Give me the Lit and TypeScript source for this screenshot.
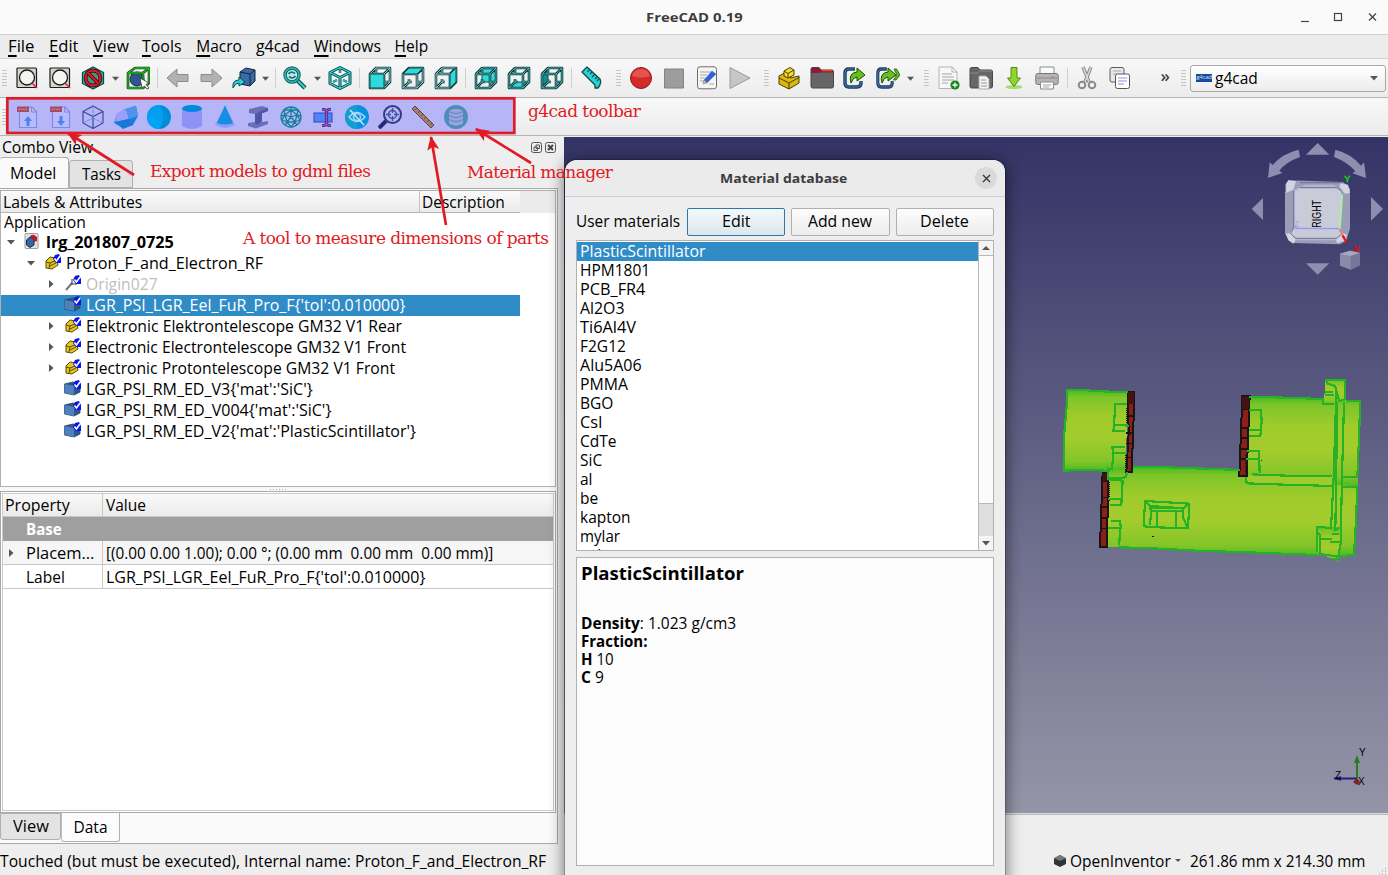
import { LitElement, html, svg, css, nothing } from "lit";
import { customElement } from "lit/decorators.js";
import { styleMap } from "lit/directives/style-map.js";

const icon = (body: unknown, w = 24, cls = "") =>
  html`<svg class="ico ${cls}" width=${w} height=${w} viewBox="0 0 24 24" fill="none" stroke-linejoin="round">${body}</svg>`;

/* A run of text fitted to a given advance width. */
const t = (content: unknown, w: number, cls = "") =>
  html`<span class="t ${cls}" style=${styleMap({ width: w + "px" })}><span class="fit" data-w=${w}>${content}</span></span>`;

const fitAll = svg`<rect x="2" y="2" width="19.500" height="19.500" rx="1" fill="#d5d5cb" stroke="#1b1b1b" stroke-width="1.200"/><circle cx="12" cy="11.500" r="7.500" fill="#f4f4f0" stroke="#1b1b1b" stroke-width="1.300"/><path d="M17 17l5 5" stroke="#e0244e" stroke-width="1.600"/>`;
const cubeWire = svg`<path d="M12 1.500L22 6.500V17.500L12 22.500L2 17.500V6.500Z M2 6.500L12 11.500L22 6.500M12 11.500V22.500" stroke="#0b4a4a" stroke-width="3"/><path d="M12 3V7M5 16L9 14M19 16L15 14" stroke="#0b4a4a" stroke-width="2.400"/><path d="M12 1.500L22 6.500V17.500L12 22.500L2 17.500V6.500Z M2 6.500L12 11.500L22 6.500M12 11.500V22.500M12 2V7M5 16L9 14M19 16L15 14" stroke="#3bd6d8" stroke-width="1.100"/>`;
const faces: Record<string, string> = {
  front: "M2 8H16V22H2Z", top: "M2 8L8 2H22L16 8Z", right: "M16 8L22 2V16L16 22Z",
  rear: "M8 2H22V16H8Z", bottom: "M2 22L8 16H22L16 22Z", left: "M2 8L8 2V16L2 22Z",
};
const viewCube = (face: string) => {
  const back = ["rear", "bottom", "left"].includes(face);
  const wire = "M8 2V8M8 13V16H11M16 16H22M2 22L8 16M2 8H16V22H2ZM2 8L8 2H22V16L16 22M16 8L22 2";
  const f = svg`<path d=${faces[face]} fill=${face === "left" ? "#158f92" : "#2fd9dc"} stroke="#0b4a4a" stroke-width="1"/>`;
  return svg`${back ? f : nothing}<path d=${wire} stroke="#123c3c" stroke-width="2.600"/><path d=${wire} stroke=${back ? "#4fb9b9" : "#8fd8d8"} stroke-width=".9"/>${back ? nothing : f}`;
};
const arrowPath = "M1 12L11 3V8.500H22V15.500H11V21Z";
const part = svg`<path d="M2 10L9 6L13 8V12L22 10V17L12 23L2 18Z" fill="#d9b90f" stroke="#4b3f00"/><path d="M7 5L13 1.500L17 4L17 9L11 12L7 10Z" fill="#f5dc2c" stroke="#4b3f00"/><path d="M7 5L11 7.500L17 4M11 7.500V12M2 12L12 17L22 11.500M12 17V23" stroke="#4b3f00"/>`;
const refresh = svg`<path d="M12 3H6Q2 3 2 7V17Q2 21 6 21H14Q18 21 18 17V15" stroke="#173a63" stroke-width="3.400"/><path d="M12 3H6Q2 3 2 7V17Q2 21 6 21H14Q18 21 18 17V15" stroke="#4f7cab" stroke-width="1"/>`;
const greenArrow = svg`<path d="M8 17Q5 7 14 6V2L22 9L14 15V11Q10 11 8 17Z" fill="#64c21c" stroke="#1e4a04"/>`;
const folder = svg`<path d="M1 3Q1 1.500 3 1.500H9L11 4H22Q23.500 4 23.500 6V20Q23.500 22 22 22H2.500Q1 22 1 20Z" fill="#666" stroke="#474747"/>`;

const I: Record<string, unknown> = {
  fit: fitAll,
  style: svg`<path d="M12 1L22.500 6.500V17.500L12 23L1.500 17.500V6.500Z" fill="#27c4c8" stroke="#0b4a4a" stroke-width="1.300"/><circle cx="12" cy="12" r="7.500" fill="#4a8f92" stroke="#3d0505" stroke-width="3.800"/><circle cx="12" cy="12" r="7.500" stroke="#d22020" stroke-width="2.300"/><path d="M7 7L17 17" stroke="#3d0505" stroke-width="3.800"/><path d="M7 7L17 17" stroke="#d22020" stroke-width="2.300"/>`,
  bbox: svg`<circle cx="11" cy="13" r="7" fill="#2f568e" stroke="#16294a"/><path d="M2 7L9 2H23L17 7ZM2 7V22H17V7M23 2V17L17 22" stroke="#0a3c0c" stroke-width="2.600"/><path d="M2 7L9 2H23L17 7ZM2 7V22H17V7M23 2V17L17 22" stroke="#25b52b" stroke-width="1.300"/><path d="M14 12L23 17L20 18.500L23 22L21 23L18.500 20L16 22Z" fill="#fff" stroke="#333" stroke-width=".8"/>`,
  back: svg`<path d=${arrowPath} fill="#b2b2b2" stroke="#8b8b8b"/>`,
  fwd: svg`<path d=${arrowPath} transform="translate(24 0) scale(-1 1)" fill="#b2b2b2" stroke="#8b8b8b"/>`,
  link: svg`<path d="M8 6L14 2L23 4V15L18 20L8 18Z" fill="#3a6aa8" stroke="#14233c"/><path d="M8 6L18 8L23 4M18 8V20" stroke="#14233c"/><path d="M1 22Q0 14 7 14V11L13 16L7 20V17Q3 17 1 22Z" fill="#2fd0d4" stroke="#0b4a4a"/>`,
  zoom: svg`<path d="M14 14L22 22" stroke="#0b4a4a" stroke-width="4.500"/><path d="M14 14L22 22" stroke="#2fcfd2" stroke-width="2.200"/><circle cx="9" cy="9" r="7" fill="#bfe7e8" stroke="#0b5a5c" stroke-width="3.400"/><circle cx="9" cy="9" r="7" stroke="#2fb9bd" stroke-width="1.600"/><path d="M5.500 8Q8 4.500 12 7.500M12.500 10Q10 13.500 6 10.500" stroke="#0b7a7c" stroke-width="1.800"/>`,
  iso: cubeWire,
  front: viewCube("front"), top: viewCube("top"), right: viewCube("right"),
  rear: viewCube("rear"), bottom: viewCube("bottom"), left: viewCube("left"),
  measure: svg`<path d="M2 6L7 1L20 13Q22 17 18 22L15 22V19Z" fill="#2dd0d3" stroke="#0b4a4a" stroke-width="1.300"/><path d="M9.500 3.500L7.500 6M12 6L10 8M14.500 8.500L12 11M17 11L15 13M19 13L17 15" stroke="#0b4a4a" stroke-width="1.200"/>`,
  record: svg`<circle cx="12" cy="12" r="10.500" fill="#d42a2a" stroke="#8e1626"/><path d="M3 10Q5 3 12 3T21 10Q12 13 3 10Z" fill="#ec6058" opacity=".75"/>`,
  stop: svg`<rect x="2.500" y="3" width="19" height="19" fill="#9d9d9d" stroke="#828282"/>`,
  macro: svg`<rect x="2.500" y=".8" width="19" height="22" rx="2.500" fill="#f5f5f2" stroke="#6d6d6d"/><path d="M5 6H17M5 9H12M5 12H10M5 15H9M14 18H19" stroke="#aaa79c"/><path d="M9 14L17 5L21 8L12 17L8 18Z" fill="#2b62d9" stroke="#4a72b8" stroke-width=".5"/><path d="M8 18L9 14L12 17Z" fill="#e8b577"/>`,
  play: svg`<path d="M2 1.500L22 12L2 22.500Z" fill="#c6c6c6" stroke="#9b9b9b"/>`,
  part,
  folder: svg`${folder}<path d="M1 7V3Q1 1.500 3 1.500H9L11 4H22Q23 4 23 6.500H11L9 7Z" fill="#8b1b36"/><path d="M12 4.500H22" stroke="#e0512f" stroke-width="1.500"/>`,
  re1: svg`${refresh}${greenArrow}`,
  re2: svg`<g transform="scale(.9 1)">${refresh}</g><g transform="translate(-2 0)">${greenArrow}</g><path d="M18 3H20.500L24 9L20 14H17.500L21 9Z" fill="#64c21c" stroke="#1e4a04" stroke-width=".8"/>`,
  newdoc: svg`<path d="M3 1H16L21 6V22.500H3Z" fill="#f7f7f7" stroke="#b4b4b4"/><path d="M16 1V6H21" stroke="#b4b4b4"/><path d="M6 8H16M6 11H18M6 14H18M6 17H12" stroke="#a6a6a6"/><circle cx="19" cy="19" r="4.600" fill="#148a20"/><path d="M16.500 19H21.500M19 16.500V21.500" stroke="#fff" stroke-width="1.300"/>`,
  open: svg`${folder}<path d="M1 7H9L11 5H23" stroke="#898989"/><path d="M10 10H17L20 13V23H10Z" fill="#f3f3f0" stroke="#aaa"/><path d="M12 14H17M12 17H18M12 20H18" stroke="#999"/>`,
  save: svg`<ellipse cx="12" cy="21" rx="8.500" ry="2" fill="#a8dc73"/><path d="M9 1.500H15V12H18.500L12 20.500L5.500 12H9Z" fill="#8fd62c" stroke="#588a20"/>`,
  print: svg`<path d="M5 8V1H19V8" fill="#fafafa" stroke="#8b8b8b"/><rect x=".8" y="7.500" width="22.400" height="11" rx="2" fill="#b5b5b5" stroke="#777"/><path d="M2 12H22" stroke="#999" stroke-width="1.500"/><path d="M16 11H19" stroke="#e66"/><path d="M5.500 16H18.500V23H5.500Z" fill="#fafafa" stroke="#8b8b8b"/><path d="M8 19H16M8 21H14" stroke="#aaa"/>`,
  cut: svg`<path d="M8 1L14 16M16 1L10 16" stroke="#8a8a8a" stroke-width="3.400"/><path d="M8 1L14 16M16 1L10 16" stroke="#d9d9d9" stroke-width="1.500"/><circle cx="7" cy="19" r="3.300" stroke="#8a8a8a" stroke-width="2"/><circle cx="17" cy="19" r="3.300" stroke="#8a8a8a" stroke-width="2"/>`,
  copy: svg`<rect x="2" y="1.500" width="14" height="14.500" rx="2" fill="#e8e8e8" stroke="#5d5d5d"/><path d="M5 5H13M5 8H10" stroke="#aaa"/><rect x="7.500" y="8" width="14" height="14.500" rx="2" fill="#fff" stroke="#555"/><path d="M10 12H19M10 15H19M10 18H16" stroke="#9090df"/>`,
};

const gdml = (down: boolean) => svg`<path d="M4.500 7V22.500H21.500V6.500L17 2H12" stroke="#7f86e4" stroke-width="1.100" fill="#b9baf9"/><path d="M16.500 2V7H21" stroke="#7f86e4"/><rect x="2" y="1.500" width="12" height="5.500" fill="#a94b62"/><path d="M3.500 4.300H12.500" stroke="#d09ab8" stroke-dasharray="1.500 .8"/><path d=${down ? "M11.500 11H14.500V16H17L13 21L9 16H11.500Z" : "M11.500 21H14.500V16H17L13 11L9 16H11.500Z"} fill="#4b82f2"/>`;
const G: unknown[] = [
  gdml(false), gdml(true),
  svg`<path d="M12 1L22 6.500V18L12 23.500L2 18V6.500ZM2 6.500L12 11.500L22 6.500M12 11.500V23.500" stroke="#44469f" stroke-width="1.200"/><path d="M12 1V13L2 18M12 13L22 18" stroke="#5d8fcb" stroke-dasharray="3 1"/>`,
  svg`<path d="M11 4L22 1L24 11L19 20L9 23L0 18L3 9Z" fill="#1a80dc"/><path d="M3 8L12 4L15 14L1 17Z" fill="#9b9ffa"/><path d="M12 4L22 .5L24 11L15 14Z" fill="#5093ec"/><path d="M1 17L15 14L19 20L9 24Z" fill="#1878d6"/>`,
  svg`<circle cx="12" cy="12" r="12" fill="#008edb"/><path d="M0 12A12 12 0 0 0 12 24Q16 18 16 12Q8 15 0 12Z" fill="#00a5fa"/><path d="M0 12A12 12 0 0 1 12 0Q16 5 16 12Q8 15 0 12Z" fill="#049df0"/>`,
  svg`<path d="M2 3V21Q12 27 22 21V3Z" fill="#8e92f6"/><ellipse cx="12" cy="3.500" rx="10" ry="3.500" fill="#008adf"/>`,
  svg`<path d="M12 .5L22 20Q12 26 2 20Z" fill="#8e9dfa"/><path d="M12 .5L20 18Q12 21 4 18Z" fill="#168ee4"/>`,
  svg`<path d="M3 4L16 1L22 3V6L16 8V17L22 16V19L10 23.500L2 21V18L9 17V9L3 8Z" fill="#6a70b8"/><path d="M9 9L16 7V16L11 20L9 18ZM12 7L22 3V6L12 10Z" fill="#5054a8"/>`,
  svg`<g stroke="#157f9c" stroke-width="1.300"><circle cx="12" cy="12" r="10"/><path d="M12 5L18 10L16 17H8L6 10ZM12 2V5M2 11L6 10M22 11L18 10M6 20L8 17M18 20L16 17M12 12V5M12 12L18 10M12 12L16 17M12 12L8 17M12 12L6 10M12 5L5 5L6 10L3 15L8 17L12 22L16 17L21 15L18 10L19 5Z"/></g>`,
  svg`<rect x="2" y="8" width="18" height="9" fill="#4a86fc" stroke="#3f45b6"/><path d="M10 4.500H12.500L14.500 6L16.500 4.500H19M14.500 6V19M10 20.500H12.500L14.500 19L16.500 20.500H19" stroke="#57308f" stroke-width="3.200"/><path d="M10 4.500H12.500L14.500 6L16.500 4.500H19M14.500 6V19M10 20.500H12.500L14.500 19L16.500 20.500H19" stroke="#9a52c0" stroke-width="1.200"/>`,
  svg`<circle cx="12" cy="12" r="12" fill="#078fe0"/><path d="M12 0A12 12 0 0 0 12 24Z" fill="#129fd0"/><path d="M4 12Q12 3 20 12Q12 21 4 12Z" stroke="#a9d5fb" stroke-width="1.500"/><circle cx="12" cy="12" r="3.500" stroke="#a9d5fb" stroke-width="1.500"/><path d="M5 5L19 20" stroke="#c5dfff" stroke-width="1.600"/>`,
  svg`<path d="M1 23L8 16" stroke="#252b72" stroke-width="4"/><circle cx="14.500" cy="9.500" r="8.500" stroke="#333a82" stroke-width="2"/><circle cx="14.500" cy="9.500" r="4" stroke="#41519e" stroke-width="1.500"/><path d="M14.500 3V8M14.500 11V16M8 9.500H13M16 9.500H21" stroke="#41519e" stroke-width="1.300"/>`,
  svg`<path d="M1 4L4 1L23 20L20 23Z" fill="#a2845e" stroke="#6c3b62"/><path d="M6 3L4 5M9 6L7 8M12 9L10 11M15 12L13 14M18 15L16 17M21 18L19 20" stroke="#6d4d55"/>`,
  svg`<circle cx="12" cy="12" r="12" fill="#4e8cba"/><path d="M5 6Q12 1.500 19 6V18.500Q12 23 5 18.500Z" fill="#98a4dc"/><path d="M5 6.500Q12 10.500 19 6.500M5 10.500Q12 14.500 19 10.500M5 14.500Q12 18.500 19 14.500" stroke="#5f83c0" stroke-width="1"/>`,
];

const check = svg`<path d="M11 1L15 0L17 4V9H12L9 5Z" fill="#0a14f0"/><path d="M10.500 4.500L12.500 7L16 2" stroke="#fff" stroke-width="1.600"/>`;
const treeIcons: Record<string, unknown> = {
  doc: svg`<rect x="1" y=".5" width="13" height="15" rx="1" fill="#e2e2e2" stroke="#9d9d9d"/><path d="M2.500 7L6 4L10 6V12L6 14.500L2.500 12Z" fill="#3465a4" stroke="#182c4c"/><path d="M6 4Q7 1 10 2L13 4V8L10 9V6Z" fill="#c9141e"/>`,
  part: svg`<path d="M2 7L6 3L12 4L14 11L8 15L2 14Z" fill="#e4c721" stroke="#5a4a00"/><path d="M2 8L6 9L11 7M6 9L5 14M6 12L12 9" stroke="#5a4a00"/>${check}`,
  origin: svg`<path d="M2 15L8 8" stroke="#777" stroke-width="2"/><path d="M8 9V4M7 9H13" stroke="#333"/>${check}`,
  solid: svg`<path d="M.5 4L9 2L16 4V12L10 15L.5 13Z" fill="#2f5688" stroke="#254268" stroke-width=".8"/><path d="M.5 4L10 6V15L.5 13Z" fill="#4e80bd"/>${check}`,
};
type Row = [number, string, string, string, number, string?];
const tree: Row[] = [
  [0, "open", "doc", "lrg_201807_0725", 128, "bold"],
  [1, "open", "part", "Proton_F_and_Electron_RF", 197],
  [2, "shut", "origin", "Origin027", 72, "dim"],
  [2, "", "solid", "LGR_PSI_LGR_Eel_FuR_Pro_F{'tol':0.010000}", 319, "sel"],
  [2, "shut", "part", "Elektronic Elektrontelescope GM32 V1 Rear", 316],
  [2, "shut", "part", "Electronic Electrontelescope GM32 V1 Front", 320],
  [2, "shut", "part", "Electronic Protontelescope GM32 V1 Front", 309],
  [2, "", "solid", "LGR_PSI_RM_ED_V3{'mat':'SiC'}", 227],
  [2, "", "solid", "LGR_PSI_RM_ED_V004{'mat':'SiC'}", 245],
  [2, "", "solid", "LGR_PSI_RM_ED_V2{'mat':'PlasticScintillator'}", 330],
];
const mats: [string, number][] = [
  ["PlasticScintillator", 126], ["HPM1801", 70], ["PCB_FR4", 65], ["Al2O3", 45], ["Ti6Al4V", 56], ["F2G12", 46],
  ["Alu5A06", 62], ["PMMA", 48], ["BGO", 33], ["CsI", 22], ["CdTe", 37], ["SiC", 22], ["al", 13], ["be", 18],
  ["kapton", 51], ["mylar", 40], ["nylon", 40],
];
const menus: [string, string, number][] = [
  ["F", "ile", 27], ["E", "dit", 30], ["V", "iew", 36], ["T", "ools", 40], ["M", "acro", 46], ["", "g4cad", 44], ["W", "indows", 67], ["H", "elp", 34],
];
const bar1 = "fit fit style > bbox | back fwd link > | zoom > iso | front top right | rear bottom left | measure : record stop macro play : part folder re1 re2 > : newdoc open save print | cut copy".split(" ");

@customElement("app-root")
export class AppRoot extends LitElement {
  static styles = css`
    :host { display: block; width: 1388px; height: 875px; overflow: hidden; position: relative; background: #eee; font: 15.5px/20px "Open Sans", "Noto Sans", sans-serif; color: #000; }
    * { box-sizing: border-box; }
    .app { display: flex; flex-direction: column; height: 875px; }
    .t, .fit { display: inline-block; white-space: pre; flex: none; }
    .t { margin-top: -2px; }
    .title .t, .dt .t, .tab .t, .p .t, .rstat .t { margin-top: 0; }
    .fit { transform-origin: 0 50%; }
    .bold { font-weight: 700; }
    .ico { display: block; flex: none; }
    .title { height: 35px; flex: none; background: #fafafa; border-bottom: 1px solid #d0d0d0; display: grid; grid-template-columns: 1fr auto 1fr; align-items: center; color: #3d3d3d; font-size: 13px; }
    .wm { display: flex; justify-content: flex-end; gap: 22px; padding-right: 9.5px; }
    .menu { height: 24px; flex: none; background: #ececec; border-bottom: 1px solid #d2d2d2; display: flex; gap: 13.8px; padding-left: 8px; align-items: center; }
    .menu u { text-underline-offset: 3px; text-decoration-thickness: 1.5px; }
    .bar { height: 39px; flex: none; display: flex; align-items: center; border-bottom: 1px solid #b4b4b4; background: linear-gradient(#f8f8f8, #ececec); }
    .bar.two { height: 38px; }
    .cell { width: 33px; flex: none; display: flex; justify-content: center; }
    .dd { width: 11.6px; flex: none; display: flex; justify-content: center; }
    .sep { width: 1px; height: 20px; margin: 0 3px; flex: none; background: #cfcfcf; }
    .grip { width: 5px; height: 18px; margin: 0 3px 0 8px; flex: none; background: radial-gradient(circle, #b2b2b2 .7px, transparent 1px) 0 0 / 2.500px 3px; }
    .grip.first { margin: 0 3.5px 0 2px; }
    .more { flex: 1; text-align: right; padding: 0 3px 4px 0; font-size: 17px; font-weight: 600; color: #444; }
    .combo { width: 196px; height: 27px; margin: 0 2px 0 1px; border: 1px solid #a8a8a8; border-radius: 3px; background: linear-gradient(#fff, #ececec); display: flex; align-items: center; padding: 0 7px 0 5px; gap: 3px; }
    .combo .t { margin-top: 0; }
    .badge { width: 16px; height: 8px; background: #1749a0; color: #d5e0f5; font-size: 6px; line-height: 7px; text-align: center; letter-spacing: -.2px; }
    .grow { flex: 1; }
    .main { flex: 1; display: flex; min-height: 0; }
    .left { width: 564px; display: flex; flex-direction: column; padding-top: 1px; }
    .dock { width: 558px; display: flex; flex-direction: column; height: 707px; border-bottom: 1px solid #a9a9a9; }
    .dhead { height: 21px; display: flex; align-items: center; padding: 0 1px 0 2px; gap: 2px; }
    .dhead .grow { align-self: stretch; }
    .tabs { height: 30px; display: flex; align-items: flex-end; flex: none; }
    .tab { height: 28px; width: 64px; border: 1px solid #b0b0b0; background: #e3e3e3; display: flex; align-items: center; justify-content: center; border-radius: 3px 3px 0 0; }
    .tab.on { height: 31px; width: 69px; padding-right: 2px; background: #fafafa; border-left: 0; border-bottom: 0; }
    .pane { flex: 1; background: #f8f8f8; border: 1px solid #a9a9a9; border-width: 1px 1px 0 0; display: flex; flex-direction: column; min-height: 0; }
    .tree { height: 297px; margin: 1px 1px 0 0; border: 1px solid #b0b0b0; background: #fff; flex: none; }
    .thead { display: flex; height: 22px; background: #ebebeb; }
    .th { background: linear-gradient(#fafafa, #eaeaea); border-bottom: 1px solid #b5b5b5; padding-left: 2px; display: flex; align-items: center; }
    .th .t { margin-top: 0; }
    .th + .th { border-left: 1px solid #c4c4c4; }
    .c1 { width: 418px; } .c2 { width: 101px; }
    .app0 { height: 19px; padding-left: 3px; display: flex; align-items: center; }
    .row { height: 21px; width: 519px; display: flex; align-items: center; }
    .tw { width: 20px; display: flex; justify-content: center; flex: none; }
    .row .ico { margin: -2px 5px 0 3px; }
    .row .tw { margin-top: -2px; }
    .row.sel { background: #308cc6; color: #fff; }
    .row.dim { color: #bebebe; }
    .split { height: 4px; display: flex; justify-content: center; align-items: center; }
    .split i { width: 17px; height: 1px; background: repeating-linear-gradient(90deg, #aaa 0 1px, transparent 1px 3px); }
    .props { flex: 1; border: 1px solid #a9a9a9; margin: 0 1px 0 0; background: #fff; display: flex; flex-direction: column; padding: 1px; border-width: 1px; outline: 1px solid #ccc; outline-offset: -3px; }
    .p { display: grid; grid-template-columns: 101px 1fr; height: 24px; align-items: stretch; }
    .p > div { display: flex; align-items: center; border-bottom: 1px solid #c8c8c8; padding-left: 3px; }
    .p > div:first-child { border-right: 1px solid #c8c8c8; }
    .p.h { background: linear-gradient(#fafafa, #eaeaea); }
    .p.base { background: #9f9f9f; color: #fff; }
    .p.base > div { border-color: #9f9f9f; padding-left: 24px; }
    .p.alt { background: #f6f6f6; }
    .p .tw { width: 21px; margin-right: 0; }
    .p .tw.s { margin-left: -4px; width: 20px; margin-right: 5px; }
    .btabs { height: 30px; display: flex; background: #fafafa; border-right: 1px solid #a9a9a9; }
    .btab { height: 27px; width: 61px; border: 1px solid #b0b0b0; border-radius: 0 0 3px 3px; background: #e3e3e3; display: flex; justify-content: center; align-items: center; }
    .btab.on { height: 29px; width: 59px; padding-top: 1px; background: #fcfcfc; border-top: 0; border-left-color: #bbb; }
    .status { flex: 1; display: flex; align-items: center; padding-top: 4px; }
    .right { flex: 1; display: flex; flex-direction: column; padding-top: 1px; }
    .view { height: 677px; background: linear-gradient(#333366, #9595a8); position: relative; border-bottom: 1px solid #dcdcdc; }
    .rstat { flex: 1; border-top: 1px solid #b8b8b8; display: flex; justify-content: flex-end; align-items: flex-end; padding: 0 23px 4px 0; gap: 4px; }
    .nav { position: absolute; left: 676px; top: 0; }
    .model { position: absolute; left: 486px; top: 233px; }
    .axes { position: absolute; left: 766px; top: 608px; }
    .dlg { position: absolute; left: 565px; top: 160px; width: 440px; height: 730px; background: #eee; border-radius: 12px 12px 0 0; box-shadow: 0 3px 14px 3px rgba(0,0,0,.42), 0 0 0 1px rgba(0,0,0,.2); display: flex; flex-direction: column; }
    .dt { height: 37px; flex: none; border-bottom: 1px solid #cfcfcf; background: #ebebeb; border-radius: 12px 12px 0 0; display: grid; grid-template-columns: 1fr auto 1fr; align-items: center; color: #3d3d3d; font-size: 13px; padding: 0 8px 0 5px; }
    .close { justify-self: end; width: 22px; height: 22px; border-radius: 50%; background: #dadada; display: grid; place-items: center; }
    .db { padding: 11px 11px 0; display: flex; flex-direction: column; }
    .btns { display: flex; gap: 6px; align-items: center; height: 27px; }
    .btns .t { margin-top: -1px; }
    .btns > .t { margin-right: 1px; }
    .btn { width: 99px; height: 28px; border: 1px solid #b0b0b0; border-radius: 2px; background: linear-gradient(#fdfdfd, #ececec); display: flex; align-items: center; justify-content: center; }
    .btn.on { border-color: #2f76a8; background: linear-gradient(#f3f8fb, #dbe7ee); }
    .list { margin-top: 5px; height: 311px; border: 1px solid #b0b0b0; background: #fff; display: flex; }
    .items { flex: 1; overflow: hidden; padding-top: 1px; }
    .m { height: 19px; padding-left: 3px; display: flex; align-items: center; }
    .m.sel { background: #308cc6; color: #fff; }
    .sb { width: 15px; border-left: 1px solid #b8b8b8; background: #dedede; display: flex; flex-direction: column; align-items: center; }
    .sbb { height: 14px; width: 100%; display: grid; place-items: center; background: #f5f5f5; }
    .thumb { height: 249px; width: 100%; background: #fbfbfb; border: 1px solid #b8b8b8; border-width: 1px 0; }
    .det { margin-top: 6px; height: 309px; border: 1px solid #b0b0b0; background: #fcfcfc; padding: 4px; line-height: 18px; display: flex; flex-direction: column; }
    .det .t { margin-top: 0; }
    .det h3 { margin: -1px 0 29px; font-size: 18px; line-height: 24px; height: 24px; }
    .ln { height: 18px; display: flex; }
    .marks { position: absolute; left: 0; top: 0; pointer-events: none; }
    .note { font: 17px "DejaVu Serif", serif; fill: #e01b24; }
    .tiny { font: 10px "Liberation Sans", sans-serif; }
  `;

  updated() {
    this.renderRoot.querySelectorAll<HTMLElement>(".fit").forEach((el) => {
      el.style.transform = `scaleX(${Number(el.dataset.w) / el.offsetWidth})`;
    });
  }

  tri(dir: string, s = 8) {
    const d = dir === "open" ? "M0 2H8L4 6.500Z" : dir === "up" ? "M0 6H8L4 2Z" : "M2 0V8L6.500 4Z";
    return html`<svg width=${s} height=${s} viewBox="0 0 8 8"><path d=${d} fill="#555"/></svg>`;
  }

  item(k: string) {
    if (k === ">") return html`<div class="dd">${this.tri("open", 7)}</div>`;
    if (k === "|") return html`<div class="sep"></div>`;
    if (k === ":") return html`<div class="grip"></div>`;
    return html`<div class="cell">${icon(I[k])}</div>`;
  }

  nav() {
    return svg`
      <g fill="#8d8eb0"><path d="M198 53L233 18L268 53Z"/><path d="M198 379L233 413L268 379Z"/><path d="M69 183V249L35 216Z"/><path d="M393 180V251L429 216Z"/>
      <path d="M176 38L180 60Q138 75 118 101L127 108L84 123L89 76L98 84Q126 50 176 38Z"/><path d="M286 38L282 60Q322 75 346 103L337 109L378 123L372 76L363 86Q334 50 286 38Z"/></g>
      <path d="M145 130L310 135L330 155V275L318 312L300 322L160 318L135 290V150Z" fill="#9b9cb8"/>
      <path d="M170 155L195 143H280L300 155L303 165L298 275L306 290L295 310H165L150 288L160 275V160Z" fill="#b4b5ca"/>
      <path d="M180 154H290L303 165V260L290 276H175L165 262V165Z" fill="#cacbd8"/><path d="M160 275H298L306 290L290 304H168L150 288Z" fill="#c9cad8"/>
      <g fill="#d3d4e2"><path d="M145 130L168 133L160 158L137 168V142Z"/><path d="M300 138L324 143L330 168L315 170L299 150Z"/><path d="M137 290L152 288L167 309L160 320L145 310Z"/><path d="M307 289L320 292L318 310L292 319L288 309Z"/></g>
      <path d="M161 161V272L152 290L168 304H290L307 290M180 137H310M303 160L290 152H180M137 142V165" fill="none" stroke="#62638a" stroke-width="2.500"/>
      <path d="M165 274L300 275" stroke="#9696ee" stroke-width="4"/><path d="M306 172L299 276" stroke="#a9efa9" stroke-width="6.500"/><path d="M298 276L310 298" stroke="#f57c7c" stroke-width="5"/><path d="M308 296L320 316" stroke="#f00c0c" stroke-width="7"/>
      <text transform="translate(242 272) rotate(-90)" font-family="Liberation Sans" font-size="40" textLength="83" lengthAdjust="spacingAndGlyphs">RIGHT</text>
      <text x="163" y="271" font-size="25" font-family="Liberation Sans" fill="#a2a2e8">Z</text><text x="313" y="134" font-size="28" font-family="Liberation Sans" fill="#0e0" stroke="#0e0">Y</text><text x="340" y="345" font-size="29" font-family="Liberation Sans" fill="#f00000" stroke="#f00000">X</text>
      <path d="M300 350L330 341L360 348V385L332 398L300 386Z" fill="#898ba8"/><path d="M300 350L332 357L360 348L330 341Z" fill="#a6a7be"/><path d="M332 357V398L360 385V348Z" fill="#75779a"/><path d="M371 360H409L390 379Z" fill="#454567"/>`;
  }

  model() {
    const g = "url(#gr)";
    return svg`
      <defs><linearGradient id="gr" x1="0" y1="0" x2="0" y2="1"><stop offset="0" stop-color="#3fba20"/><stop offset=".1" stop-color="#7dc529"/><stop offset=".33" stop-color="#9fcb2b"/><stop offset=".6" stop-color="#a3cc2c"/><stop offset=".88" stop-color="#83c529"/><stop offset="1" stop-color="#4aba22"/></linearGradient></defs>
      <g fill=${g}><path d="M49 58L235 64L226 295L175 303L38 302L43 185Z"/><path d="M249 288L570 300L590 320L850 335L920 350L912 559L150 530L170 300Z"/><path d="M597 78L932 91L924 350L585 320Z"/><path d="M826 28L887 30V95L815 104L823 80Z"/><path d="M800 470H870L866 575L800 545Z"/></g>
      <path d="M585 317L850 320V348L585 340Z" fill="#a0cb2c"/>
      <g fill="#8a2017" stroke="#191416" stroke-width="6"><path d="M234 65L253 66L251 140L245 305H229L236 190Z"/><path d="M577 78H599L590 318H568Z"/><path d="M158 305L175 308L171 530H150Z"/></g>
      <path d="M235 66H252V102H235ZM577 80H597V118H577ZM160 308H173V334H160Z" fill="#471214"/>
      <path d="M230 137H250M229 188H248M228 220H247M228 262H246M576 118H598M575 174H595M574 203H592M573 237H590M570 267H590M158 334H175M157 382H173M156 410H173M154 444H173M152 475H173" stroke="#191416" stroke-width="5"/>
      <path d="M231 115V170M226 255V300M596 115V160M588 255V315M176 335V395M171 480V525" stroke="#191416" stroke-width="5" stroke-dasharray="3 3"/>
      <g fill="none" stroke="#27b126" stroke-width="6.500">
        <path d="M49 60H105L130 63L234 67M50 58L50 110L43 190L41 302L120 299L180 303M231 103L196 102L192 164L190 184H226M192 164L236 167M225 230H187L190 250H232M190 250L186 298L175 296V326L228 322L231 306M178 328L218 332L214 405H180M174 386H214M182 452H210L212 470L207 526M173 473H212M205 532L290 534L440 542L600 547L800 555"/>
        <path d="M249 290L330 291L434 295L570 300M597 80L707 83L815 87M597 119H633L635 155L631 198H596M596 181H632M592 243H627L629 310M588 266H630M588 320L590 340L706 344L850 348M605 313L710 317L847 319"/>
        <path d="M285 393L418 401L414 475L322 472L281 469ZM285 393L300 408L400 415L418 401M300 408L303 430L300 465M398 415L400 445L414 475M306 423H396M321 423V472M378 425V472M300 415H400"/>
        <path d="M828 30H886V88L868 94L855 48L832 40ZM826 65H850M825 76H852M820 84V102H852M858 50V95L851 320L843 475L810 470L802 472V545M862 97L856 480L868 475M882 97L876 322L872 520L865 560M887 93H930L928 180L922 320H875M872 350H922L918 450L912 555L870 558M806 506H845M810 510V552L864 560M802 487L810 494V505M845 493H866M840 517H870M847 568H864V573"/>
      </g><path d="M305 499H312M632 271H636" stroke="#111" stroke-width="3"/>`;
  }

  render() {
    return html`<div class="app">
      <div class="title"><span></span>${t("FreeCAD 0.19", 97, "bold")}
        <div class="wm">
          <svg width="11" height="13"><path d="M1 10.500H9" stroke="#444" stroke-width="1.200"/></svg>
          <svg width="12" height="13"><rect x="1.500" y="2.500" width="7" height="7" fill="none" stroke="#444" stroke-width="1.200"/></svg>
          <svg width="12" height="13"><path d="M2 2.500L9 9.500M9 2.500L2 9.500" stroke="#444" stroke-width="1.300"/></svg>
        </div></div>
      <div class="menu">${menus.map(([a, b, w]) => t(html`<u>${a}</u>${b}`, w))}</div>
      <div class="bar"><div class="grip first"></div>${bar1.map((k) => this.item(k))}
        <div class="more">»</div><div class="grip"></div>
        <div class="combo"><span class="badge">g4cad</span>${t("g4cad", 43)}<span class="grow"></span>${this.tri("open")}</div>
      </div>
      <div class="bar two"><div class="grip first"></div>
        ${G.map(() => html`<div class="cell"></div>`)}</div>
      <div class="main">
        <div class="left">
          <div class="dock">
            <div class="dhead">${t("Combo View", 91)}<span class="grow"></span>
              <svg width="12" height="12"><rect x=".5" y=".5" width="10" height="10" rx="2" fill="none" stroke="#555"/><path d="M5 3H8.500V6.500H5ZM3 5H6.500V8.500H3Z" fill="none" stroke="#555"/></svg>
              <svg width="12" height="12"><rect x=".5" y=".5" width="10" height="10" rx="2" fill="none" stroke="#555"/><path d="M3 3L8 8M8 3L3 8" stroke="#444" stroke-width="2"/></svg></div>
            <div class="tabs"><div class="tab on">${t("Model", 46)}</div><div class="tab">${t("Tasks", 39)}</div></div>
            <div class="pane">
              <div class="tree">
                <div class="thead"><div class="th c1">${t("Labels & Attributes", 139)}</div><div class="th c2">${t("Description", 83)}</div></div>
                <div class="app0">${t("Application", 82)}</div>
                ${tree.map(([d, tw, ic, s, w, c]) => html`<div class="row ${c ?? ""}">
                  ${Array.from({ length: d }, () => html`<span class="tw"></span>`)}<span class="tw">${tw ? this.tri(tw) : nothing}</span>
                  <svg class="ico" width="17" height="17" viewBox="0 0 17 17" fill="none">${treeIcons[ic]}</svg>${t(s, w)}</div>`)}
              </div>
              <div class="split"><i></i></div>
              <div class="props">
                <div class="p h"><div>${t("Property", 65)}</div><div>${t("Value", 40)}</div></div>
                <div class="p base"><div>${t("Base", 36, "bold")}</div><div></div></div>
                <div class="p alt"><div><span class="tw s">${this.tri("shut")}</span>${t("Placem…", 68)}</div><div>${t("[(0.00 0.00 1.00); 0.00 °; (0.00 mm  0.00 mm  0.00 mm)]", 387)}</div></div>
                <div class="p"><div><span class="tw"></span>${t("Label", 39)}</div><div>${t("LGR_PSI_LGR_Eel_FuR_Pro_F{'tol':0.010000}", 319)}</div></div>
              </div>
            </div>
            <div class="btabs"><div class="btab">${t("View", 36)}</div><div class="btab on">${t("Data", 34)}</div></div>
          </div>
          <div class="status">${t("Touched (but must be executed), Internal name: Proton_F_and_Electron_RF", 546)}</div>
        </div>
        <div class="right">
          <div class="view">
            <svg class="nav" width="148" height="145" viewBox="0 0 444 435">${this.nav()}</svg>
            <svg class="model" width="338" height="200" viewBox="0 0 1014 600" shape-rendering="crispEdges">${this.model()}</svg>
            <svg class="axes" width="40" height="42"><path d="M27 33V14" stroke="#208020" stroke-width="2"/><path d="M24 18L27 10L30 18Z" fill="#208020"/><path d="M27 33.500H4" stroke="#20207c" stroke-width="2"/><path d="M4 33.500L11 31V36Z" fill="#20207c"/><path d="M27 33L30 37L27 40L23 37Z" fill="#802020"/><text class="tiny" x="29" y="11">Y</text><text class="tiny" x="5" y="34">Z</text><text class="tiny" x="28" y="40">X</text></svg>
          </div>
          <div class="rstat">
            <svg width="12" height="20" viewBox="0 0 12 20"><path d="M6 4L12 7.500V13L6 16L0 13V7.500Z" fill="#2f3436"/><path d="M6 4L12 7L6 10L0 7Z" fill="#777"/></svg>
            ${t("OpenInventor", 101)}<svg width="7" height="20"><path d="M0 8H6L3 11Z" fill="#555"/></svg><span></span>${t("261.86 mm x 214.30 mm", 175)}
          </div>
        </div>
      </div>
      </div>
      <div class="dlg">
        <div class="dt"><span></span>${t("Material database", 127, "bold")}<div class="close"><svg width="9" height="9"><path d="M1 1L8 8M8 1L1 8" stroke="#333" stroke-width="1.300"/></svg></div></div>
        <div class="db">
          <div class="btns">${t("User materials", 104)}<div class="btn on">${t("Edit", 29)}</div><div class="btn">${t("Add new", 64)}</div><div class="btn">${t("Delete", 49)}</div></div>
          <div class="list"><div class="items">${mats.map(([n, w], i) => html`<div class="m ${i ? "" : "sel"}">${t(n, w)}</div>`)}</div>
            <div class="sb"><div class="sbb">${this.tri("up")}</div><div class="thumb"></div><span class="grow"></span><div class="sbb">${this.tri("open")}</div></div></div>
          <div class="det"><h3>${t("PlasticScintillator", 163, "bold")}</h3>
            <div class="ln">${t(html`<b>Density</b>: 1.023 g/cm3`, 155)}</div><div class="ln">${t("Fraction:", 67, "bold")}</div>
            <div class="ln">${t(html`<b>H</b> 10`, 33)}</div><div class="ln">${t(html`<b>C</b> 9`, 23)}</div></div>
        </div>
      </div>
      <svg class="marks" width="1388" height="875">
        <defs><marker id="a" markerUnits="userSpaceOnUse" markerWidth="16" markerHeight="14" refX="13" refY="6" orient="auto"><path d="M0 0L14 6L0 12L3 6Z" fill="#e01b24"/></marker></defs>
        <rect x="7.300" y="98.300" width="507" height="34.700" fill="#b5b5f8" stroke="#e01b24" stroke-width="2.700"/>
        ${G.map((g, i) => svg`<svg x=${15 + i * 33} y="105" width="24" height="24" viewBox="0 0 24 24" fill="none">${g}</svg>`)}
        <g stroke="#e01b24" stroke-width="2.700"><path d="M134 175L68 133" marker-end="url(#a)"/><path d="M531 163L476 129" marker-end="url(#a)"/><path d="M446 225L431 137" marker-end="url(#a)"/></g>
        <text class="note" x="528" y="117" textLength="113">g4cad toolbar</text><text class="note" x="150" y="177" textLength="221">Export models to gdml files</text>
        <text class="note" x="467" y="178" textLength="146">Material manager</text><text class="note" x="243" y="244" textLength="306">A tool to measure dimensions of parts</text>
        <path d="M1385 874h1M1382 874h1M1385 871h1M1379 874h1M1382 871h1M1385 868h1" stroke="#999"/>
      </svg>`;
  }
}
